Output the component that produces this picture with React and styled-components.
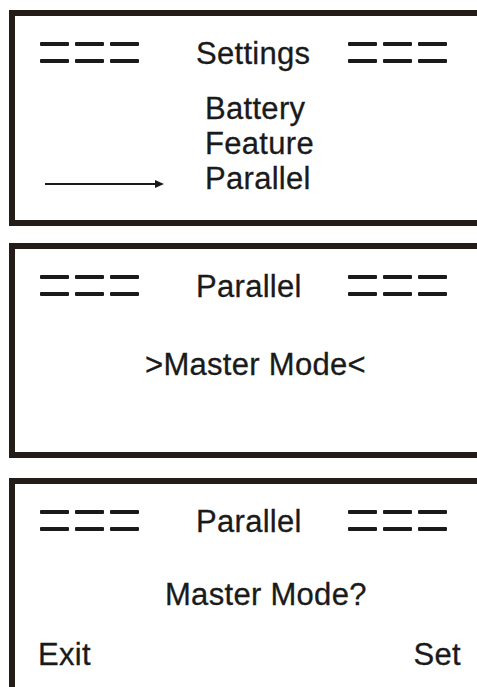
import React from "react";
import styled, { createGlobalStyle } from "styled-components";

const Global = createGlobalStyle`
  html, body {
    margin: 0;
    padding: 0;
    background: #ffffff;
    overflow: hidden;
  }
  body {
    font-family: "Liberation Sans", Arial, sans-serif;
    color: #1a1a1a;
  }
`;

const Page = styled.div`
  display: flex;
  flex-direction: column;
  gap: 17px;
  padding: 10px 0 0 9px;
  width: 490px;
`;

// each LCD frame runs off the right edge, like in the manual scan
const Screen = styled.div`
  box-sizing: border-box;
  width: 490px;
  height: ${(p) => p.h}px;
  margin-top: ${(p) => p.mt || 0}px;
  border: 6px solid #231c18;
  background: #fff;
  padding-top: 23px;
  display: flex;
  flex-direction: column;
`;

const Header = styled.div`
  display: grid;
  grid-template-columns: 99px 209px 99px;
  padding-left: 25px;
  height: 30px;
`;

const Text = styled.div`
  font-size: 31px;
  line-height: 30px;
  letter-spacing: 0.3px;
  white-space: nowrap;
  -webkit-text-stroke: 0.3px #1a1a1a;
`;

const Title = styled(Text)`
  padding-left: 57px;
`;

const Menu = styled.div`
  display: grid;
  grid-template-columns: 160px auto;
  grid-auto-rows: 30px;
  row-gap: 5px;
  margin-top: 25px;
  padding-left: 30px;
`;

const Pointer = styled.div`
  grid-column: 1;
  padding-top: 11px;
`;

const Item = styled(Text)`
  grid-column: 2;
`;

const Message = styled(Text)`
  margin-top: ${(p) => p.mt}px;
  padding-left: ${(p) => p.indent}px;
`;

const Footer = styled.div`
  display: flex;
  justify-content: space-between;
  margin-top: 30px;
  padding: 0 32px 0 23px;
`;

const Dashes = () => (
  <svg width="99" height="24" viewBox="0 0 99 24">
    {[3, 20].map((y) =>
      [0, 35, 70].map((x) => (
        <rect key={`${x}-${y}`} x={x} y={y} width="29" height="4" rx="1" fill="#1a1a1a" />
      ))
    )}
  </svg>
);

const Arrow = () => (
  <svg width="120" height="10" viewBox="0 0 120 10">
    <line x1="0" y1="5" x2="112" y2="5" stroke="#1a1a1a" strokeWidth="1.8" />
    <polygon points="110,1 119,5 110,9" fill="#1a1a1a" />
  </svg>
);

const ScreenHeader = ({ title }) => (
  <Header>
    <Dashes />
    <Title>{title}</Title>
    <Dashes />
  </Header>
);

export default function App() {
  return (
    <>
      <Global />
      <Page>
        <Screen h={216}>
          <ScreenHeader title="Settings" />
          <Menu>
            <Item>Battery</Item>
            <Item>Feature</Item>
            <Pointer>
              <Arrow />
            </Pointer>
            <Item>Parallel</Item>
          </Menu>
        </Screen>

        <Screen h={215}>
          <ScreenHeader title="Parallel" />
          <Message mt={48} indent={130}>
            &gt;Master Mode&lt;
          </Message>
        </Screen>

        <Screen h={230} mt={3}>
          <ScreenHeader title="Parallel" />
          <Message mt={43} indent={150}>
            Master Mode?
          </Message>
          <Footer>
            <Text>Exit</Text>
            <Text>Set</Text>
          </Footer>
        </Screen>
      </Page>
    </>
  );
}
